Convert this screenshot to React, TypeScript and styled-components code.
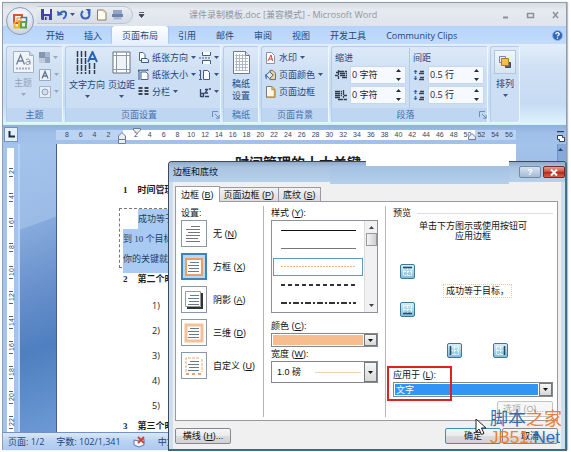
import React from "react";
import styled, { createGlobalStyle, css } from "styled-components";

const uiFont = `"Open Sans", "Noto Sans CJK SC", sans-serif`;
const dialogFont = `"Liberation Sans", "Noto Sans CJK SC", sans-serif`;

const GlobalStyle = createGlobalStyle`
  *, *::before, *::after { box-sizing: border-box; }
  body { margin: 0; background: #fff; }
  button, input, select { font: inherit; color: inherit; margin: 0; padding: 0; }
  svg { display: block; flex: none; }
`;

const Screen = styled.div`
  position: relative;
  height: 100vh;
  padding: 2px 4px 2px 2px;
  overflow: hidden;
  font: 9px/12px ${uiFont};
  color: #24457c;
  background: #fff;
`;

const AppWindow = styled.div`
  height: 100%;
  display: flex;
  flex-direction: column;
  background: #c3daf5;
  border: 1px solid #8f9db0;
  border-bottom: 0;
  box-shadow: 1px 0 1px #b9bdc4;
`;

/* Title bar */
const TitleBar = styled.header`
  position: relative;
  height: 23px;
  flex: none;
  display: flex;
  align-items: center;
  padding-left: 34px;
  background: linear-gradient(#d6dbe2, #e6eaf0 30%, #dfe5ee);
`;
const OfficeButton = styled.button`
  position: absolute;
  left: 3px;
  top: 4px;
  width: 28px;
  height: 28px;
  display: grid;
  place-items: center;
  border: 1px solid #8e9cb2;
  border-radius: 50%;
  background: radial-gradient(circle at 50% 30%, #fff, #dfe4ee 55%, #b9c4d6);
  z-index: 1;
`;
const QuickBar = styled.div`
  display: flex;
  align-items: center;
  gap: 5px;
  height: 18px;
  padding: 0 9px 0 4px;
  border: 1px solid #bcc6d4;
  border-left: 0;
  border-radius: 0 9px 9px 0;
  background: linear-gradient(#e9edf3, #d4dce8);
`;
const IconButton = styled.button`
  display: flex;
  align-items: center;
  gap: 2px;
  border: 0;
  background: none;
`;
const WindowTitle = styled.h1`
  flex: 1;
  margin: 0;
  padding-left: 44px;
  font-size: 9px;
  font-weight: 400;
  color: #8f979f;
  white-space: nowrap;
`;
const WindowButtons = styled.div`
  display: flex;
  gap: 16px;
  padding-right: 6px;
`;

/* Tabs */
const TabStrip = styled.nav`
  height: 18px;
  flex: none;
  display: flex;
  align-items: stretch;
  padding: 0 3px 0 33px;
  background: linear-gradient(#b5d3fa, #c4dcfa);
`;
const RibbonTab = styled.button<{ $active?: boolean }>`
  border: 0;
  padding: 2px 10px 0;
  background: none;
  white-space: nowrap;
  ${(p) =>
    p.$active &&
    css`
      border-radius: 3px 3px 0 0;
      background: linear-gradient(#fff, #e6f0fb);
      box-shadow: 0 0 2px #7fa3d2;
    `}
`;
const HelpButton = styled(IconButton)`
  margin-left: auto;
`;

/* Ribbon */
const Ribbon = styled.div`
  height: 81px;
  flex: none;
  display: flex;
  gap: 2px;
  padding: 2px 2px 1px 3px;
  background: linear-gradient(#e3eefa, #cfe0f4 30%, #c6dbf3 75%, #ddf4fd);
  border-bottom: 1px solid #d5f4f9;
`;
const GroupBox = styled.section<{ $width: number }>`
  width: ${(p) => p.$width}px;
  flex: none;
  display: flex;
  flex-direction: column;
  border: 1px solid #b2cbe9;
  border-right-color: #eef8fe;
  border-bottom-color: #e3fafd;
  border-radius: 3px;
  background: linear-gradient(#dde9f7, #ccdef3 40%, #cadef4);
`;
const GroupBody = styled.div`
  flex: 1;
  display: flex;
  gap: 3px;
  padding: 1px 3px 0;
`;
const GroupLabel = styled.footer`
  height: 14px;
  flex: none;
  display: flex;
  align-items: center;
  justify-content: center;
  color: #4470ad;
  background: #bed6f2;
`;
const GroupName = styled.span`
  flex: 1;
  text-align: center;
`;
const BigButton = styled.button<{ $faded?: boolean }>`
  display: flex;
  flex-direction: column;
  align-items: center;
  justify-content: flex-start;
  flex: 1;
  gap: 4px;
  padding-top: 3px;
  border: 0;
  background: none;
  white-space: nowrap;
  color: ${(p) => (p.$faded ? "#93a3b8" : "inherit")};
`;
const SmallStack = styled.div`
  display: flex;
  flex-direction: column;
  padding-top: 1px;
`;
const SmallButton = styled.button`
  height: 17px;
  display: flex;
  align-items: center;
  gap: 3px;
  border: 0;
  background: none;
  white-space: nowrap;
`;
const ArrangeButton = styled(BigButton)`
  flex: 1;
  & > span:first-child {
    display: grid;
    place-items: center;
    width: 22px;
    height: 24px;
    border: 1px solid #b0c6e0;
    background: linear-gradient(#f0f6fc, #d5e4f5);
  }
`;
const SpinColumn = styled.div`
  flex: 1;
  display: flex;
  flex-direction: column;
  gap: 2px;
  padding-top: 4px;
  & + & {
    border-left: 1px solid #b0c9e8;
    padding-left: 3px;
  }
`;
const SpinRow = styled.label`
  display: flex;
  align-items: center;
  gap: 3px;
  height: 18px;
`;
const SpinField = styled.span`
  flex: 1;
  min-width: 0;
  height: 18px;
  display: flex;
  align-items: center;
  padding: 0 4px 0 1px;
  background: #f6fafe;
  border: 1px solid #c5d7ee;
  color: #1c2430;
`;
const SpinInput = styled.input`
  flex: 1;
  min-width: 0;
  width: 20px;
  border: 0;
  outline: 0;
  background: none;
  font-size: 9px;
`;

/* Work area */
const RulerBar = styled.div`
  height: 19px;
  flex: none;
  display: flex;
  align-items: center;
  background: linear-gradient(#8fb0dc, #9fbfe9 40%, #a2c2ec);
`;
const TabStop = styled.button`
  width: 14px;
  height: 15px;
  flex: none;
  margin: 0 38px 0 1px;
  display: grid;
  place-items: center;
  border: 1px solid #6f93c8;
  background: #e4eefb;
`;
const RulerScale = styled.div`
  position: relative;
  width: 460px;
  height: 10px;
  display: flex;
  padding-left: 4px;
  background: linear-gradient(90deg, #bcd3f2 67px, #fff 67px, #fff 419px, #bcd3f2 419px);
  font: 7px/10px ${dialogFont};
  color: #3c4654;
`;
const RulerMark = styled.span`
  flex: 1 1 0;
  width: 0;
  text-align: center;
`;
const IndentMark = styled.svg<{ $x: number; $y: number }>`
  position: absolute;
  left: ${(p) => p.$x}px;
  top: ${(p) => p.$y}px;
`;
const BrowseIcon = styled.span`
  margin: 4px 1px 0 auto;
`;
const Workspace = styled.main`
  flex: 1;
  min-height: 0;
  display: flex;
  background: linear-gradient(180deg, #a5c4ec, #8fb0df 22%, #5580bf 58%, #4c7abb 78%, #6f9bd6);
`;
const SideRuler = styled.div`
  width: 17px;
  flex: none;
  overflow: hidden;
  padding: 4px 4px 0 4px;
  background: #a4c4ee;
  border-right: 2px solid #b8d2f4;
`;
const SideScale = styled.div`
  height: 100%;
  padding-top: 12px;
  background: #fff;
  font: 7px/9px ${dialogFont};
  color: #3c4654;
`;
const SideMark = styled.span`
  display: flex;
  align-items: center;
  justify-content: center;
  gap: 2px;
  height: 25px;
  width: 9px;
  writing-mode: vertical-rl;
  transform: rotate(180deg);
  white-space: nowrap;
  &::before,
  &::after {
    content: "";
    width: 4px;
    height: 1px;
    background: #59626e;
  }
`;
const Desk = styled.div`
  width: 37px;
  flex: none;
  border-right: 1px solid #41618f;
  background: linear-gradient(160deg, #a5c4ec, #9bbbe7 80px, #86aadc 81px, #6890cc 50%, #4f7fc0 70%, #6d9ad5);
`;
const Page = styled.article`
  width: 459px;
  flex: none;
  padding: 9px 39px 0 62px;
  background: #fff;
  color: #1c1c1c;
  overflow: hidden;
`;
const PageTitle = styled.h2`
  margin: 0;
  font: 700 14px/18px "Noto Sans CJK SC", sans-serif;
  text-align: center;
`;
const Heading = styled.h3`
  display: flex;
  gap: 10px;
  margin: 0;
  padding-left: 4px;
  font: 700 9px/16px "Liberation Serif", "Noto Sans CJK SC", serif;
`;
const FirstHeading = styled(Heading)`
  margin: 11px 0 10px;
`;
const BorderedText = styled.div`
  height: 60px;
  padding-left: 3px;
  border: 1px dashed #777;
  font: 9px/20px "Liberation Serif", "Noto Sans CJK SC", serif;
  color: #27405f;
`;
const SelectedLine = styled.p<{ $indent?: boolean }>`
  margin: 0 0 0 ${(p) => (p.$indent ? 15 : 0)}px;
  height: 20px;
  background: #a9cbf3;
  white-space: nowrap;
`;
const SelectionTail = styled.div`
  height: 5px;
  margin: 0 0 -2px 4px;
  background: #a9cbf3;
`;
const NumberedList = styled.ol`
  margin: 6px 0 0;
  padding: 0 0 0 33px;
  list-style: none;
  font-family: ${uiFont};
`;
const NumberedItem = styled.li`
  height: 25px;
  line-height: 25px;
`;
const ScrollGutter = styled.div`
  width: 9px;
  margin-left: auto;
  padding-top: 4px;
  background: #86a9da;
  border-left: 1px solid #6f93c8;
`;
const StatusBar = styled.footer`
  height: 18px;
  flex: none;
  display: flex;
  align-items: center;
  gap: 12px;
  padding-left: 5px;
  background: linear-gradient(#dbe8f8, #bcd4f2 45%, #adc9ee);
  border-top: 1px solid #6f93c8;
`;

/* Dialog */
const Dialog = styled.section`
  position: absolute;
  left: 168px;
  right: 4px;
  top: 161px;
  bottom: 1px;
  display: flex;
  flex-direction: column;
  padding: 0 4px;
  border: 1px solid #3b4a5c;
  border-right: 2px solid #3f7386;
  border-bottom: 2px solid #32717e;
  border-radius: 4px 4px 0 0;
  background: #cfdeee;
  font: 9px/12px ${dialogFont};
  color: #111;
`;
const DialogTitle = styled.header`
  position: relative;
  height: 20px;
  flex: none;
  display: flex;
  align-items: center;
  margin: 0 -4px;
  padding: 0 0 0 4px;
  border-radius: 3px 3px 0 0;
  background: linear-gradient(#8fa9c6, #a9c4e2 25%, #b8d0ea);
`;
const TitleBand = styled.span`
  position: absolute;
  left: 161px;
  right: 56px;
  top: 4px;
  height: 18px;
  background: linear-gradient(#a4c1e2, #b5cfeb);
`;
const TitleGap = styled.span`
  position: absolute;
  left: 197px;
  right: 56px;
  top: -1px;
  height: 5px;
  background: #fff;
`;
const DialogName = styled.h2`
  flex: 1;
  margin: 0;
  font-size: 9px;
  font-weight: 400;
`;
const CaptionButton = styled.button<{ $close?: boolean }>`
  width: 22px;
  height: 12px;
  margin-left: 2px;
  display: grid;
  place-items: center;
  border: 1px solid ${(p) => (p.$close ? "#7b2a22" : "#7288a3")};
  border-radius: 2px;
  background: ${(p) =>
    p.$close ? "linear-gradient(#e0a094, #c9503f 48%, #b5281a 52%, #d4634c)" : "linear-gradient(#d6e3f2, #a5bcd6)"};
  font: 700 9px/9px ${dialogFont};
  color: #fff;
`;
const DialogBody = styled.div`
  flex: 1;
  min-height: 0;
  display: flex;
  flex-direction: column;
  padding: 4px 3px 5px 2px;
  background: #f0f0f0;
`;
const DialogTabs = styled.div`
  height: 15px;
  flex: none;
  display: flex;
  align-items: flex-end;
`;
const DialogTab = styled.button<{ $active?: boolean }>`
  height: ${(p) => (p.$active ? 16 : 14)}px;
  margin-bottom: ${(p) => (p.$active ? -1 : 0)}px;
  padding: 0 ${(p) => (p.$active ? 5 : 4)}px;
  border: 1px solid #989ca2;
  border-bottom: 0;
  background: ${(p) => (p.$active ? "#fff" : "linear-gradient(#f3f3f3, #dcdcdc)")};
  white-space: nowrap;
  z-index: ${(p) => (p.$active ? 1 : 0)};
  & + & {
    border-left: 0;
  }
`;
const TabPanel = styled.div`
  flex: 1;
  min-height: 0;
  display: flex;
  padding: 4px 4px 3px 5px;
  border: 1px solid #989ca2;
  background: #fff;
`;
const SettingColumn = styled.fieldset`
  width: 83px;
  flex: none;
  margin: 0;
  padding: 0;
  border: 0;
  border-right: 1px solid #b5b5b5;
`;
const FieldLabel = styled.label`
  display: block;
  height: 14px;
  line-height: 14px;
`;
const SettingList = styled.div`
  display: flex;
  flex-direction: column;
  gap: 6px;
`;
const SettingButton = styled.button<{ $active?: boolean }>`
  height: 27px;
  display: flex;
  align-items: center;
  gap: 6px;
  border: 0;
  background: none;
  text-align: left;
  & > span:first-child {
    width: 26px;
    height: 27px;
    display: grid;
    place-items: center;
    border: ${(p) => (p.$active ? "2px solid #3f82bd" : "1px solid #8798aa")};
    background: ${(p) => (p.$active ? "#b9d9f2" : "#fff")};
  }
`;
const StyleColumn = styled.div`
  width: 122px;
  flex: none;
  padding: 0 7px;
  border-right: 1px solid #b5b5b5;
`;
const StyleList = styled.div`
  display: flex;
  height: 93px;
  margin-bottom: 6px;
  border: 1px solid #8d9299;
`;
const StyleOptions = styled.div`
  flex: 1;
  padding: 1px 1px 0;
`;
const StyleOption = styled.button<{ $active?: boolean }>`
  width: 100%;
  height: 18px;
  display: grid;
  place-items: center;
  border: 1px solid ${(p) => (p.$active ? "#5b9cc4" : "transparent")};
  background: none;
`;
const MiniScroll = styled.div`
  width: 13px;
  display: flex;
  flex-direction: column;
  align-items: center;
  padding: 5px 0;
  background: #f1f1f1;
  border-left: 1px solid #ddd;
`;
const ScrollThumb = styled.span`
  width: 11px;
  height: 13px;
  margin: 4px 0 auto;
  border: 1px solid #999;
  background: linear-gradient(90deg, #f4f4f4, #cfcfcf);
`;
const SelectFrame = styled.div<{ $height: number }>`
  display: flex;
  height: ${(p) => p.$height}px;
  border: 1px solid #85898f;
  background: #fff;
`;
const Select = styled.select<{ $kind: "colour" | "width" | "target" }>`
  appearance: none;
  flex: 1;
  min-width: 0;
  border: 1px solid #fff;
  border-radius: 0;
  outline: 0;
  padding-left: 4px;
  line-height: 10px;
  background: #fff;
  ${(p) =>
    p.$kind === "colour" &&
    css`
      background: #f8bd8f;
    `}
  ${(p) =>
    p.$kind === "width" &&
    css`
      background: linear-gradient(#edd2b8, #edd2b8) 42px 9px / 46px 1px no-repeat #fff;
    `}
  ${(p) =>
    p.$kind === "target" &&
    css`
      padding-left: 1px;
      background: #3294f4;
      color: #fff;
    `}
`;
const SelectArrow = styled.span`
  width: 13px;
  flex: none;
  display: grid;
  place-items: center;
  border: 1px solid #74787e;
  background: linear-gradient(#f6f6f6, #d8d8d8);
  pointer-events: none;
`;
const PreviewColumn = styled.div`
  flex: 1;
  min-width: 0;
  display: flex;
  flex-direction: column;
  padding-left: 7px;
`;
const PreviewHead = styled.div`
  display: flex;
  align-items: center;
  gap: 6px;
  height: 14px;
  &::after {
    content: "";
    flex: 1;
    height: 1px;
    background: #dcdcdc;
  }
`;
const PreviewHint = styled.p`
  margin: 1px 0 0;
  line-height: 10px;
  text-align: center;
`;
const PreviewArea = styled.div`
  display: grid;
  grid-template-columns: 15px 1fr;
  column-gap: 28px;
  padding: 23px 0 0 7px;
`;
const SideButtons = styled.div`
  display: flex;
  flex-direction: column;
  gap: 23px;
`;
const EdgeButton = styled.button`
  width: 15px;
  height: 15px;
  display: grid;
  place-items: center;
  border: 1px solid #3d7896;
  border-radius: 2px;
  background: linear-gradient(#d6eefa, #7fbede);
`;
const PreviewText = styled.span`
  align-self: center;
  justify-self: start;
  padding: 0 2px;
  border: 1px dotted #e3c9a4;
`;
const BottomButtons = styled.div`
  display: flex;
  gap: 31px;
  margin: 26px 0 10px 54px;
`;
const TargetField = styled.div`
  position: relative;
`;
const Highlight = styled.span`
  position: absolute;
  left: -6px;
  top: -2px;
  width: 65px;
  height: 35px;
  border: 2px solid #e0211d;
  pointer-events: none;
`;
const PushButton = styled.button<{ $primary?: boolean }>`
  width: 56px;
  height: 16px;
  border: 1px solid ${(p) => (p.$primary ? "#3c8fb5" : "#85898f")};
  border-radius: 2px;
  background: linear-gradient(#f5f5f5, #ebebeb 48%, #dcdcdc 52%, #d2d2d2);
  line-height: 12px;
  white-space: nowrap;
  &:disabled {
    border-color: #c4c4c4;
    background: #f7f7f7;
    color: #aaa;
  }
`;
const OptionsButton = styled(PushButton)`
  align-self: flex-end;
  margin-top: 4px;
  padding-left: 5px;
  text-align: left;
`;
const DialogFooter = styled.footer`
  display: flex;
  align-items: center;
  gap: 1px;
  padding-top: 7px;
  & > :first-child {
    margin-right: auto;
  }
`;
const Watermark = styled.div`
  position: absolute;
  right: 9px;
  bottom: 4px;
  width: 72px;
  font: 18px/22px "Noto Sans CJK SC", sans-serif;
  color: #2d6fb4;
  white-space: nowrap;
  pointer-events: none;
`;
const WatermarkSite = styled.div`
  font: 17px/20px "Liberation Sans", sans-serif;
`;
const Orange = styled.span`
  color: #ee8035;
`;
const Pointer = styled.svg`
  position: absolute;
  left: 475px;
  top: 418px;
`;

const Caret = ({ up = false, color = "#3b5684" }: { up?: boolean; color?: string }) => (
  <svg width="5" height="3" viewBox="0 0 5 3" aria-hidden="true">
    <path d={up ? "M0 3h5L2.5 0z" : "M0 0h5L2.5 3z"} fill={color} />
  </svg>
);

const OfficeLogo = () => (
  <svg width="18" height="18" viewBox="0 0 18 18" fill="none" strokeWidth="2">
    <path d="M8 11H3V3h8v3" stroke="#d8542a" />
    <path d="M9 5.5h6.5V11" stroke="#3c78c8" strokeWidth="1.6" />
    <path d="M8 8v7.500H3.500V10" stroke="#f0b428" />
    <path d="M10 10h5v5.500h-5z" stroke="#5fa53a" />
    <path d="M6 6h4v4H6z" stroke="#e88a36" strokeWidth="1" />
  </svg>
);
const SaveIcon = () => (
  <svg width="11" height="11" viewBox="0 0 11 11">
    <path d="M0 0h11v11H1L0 10z" fill="#4444a8" />
    <path d="M3 0h6v5H3z" fill="#eef2ff" />
    <path d="M3 7h5v4H3z" fill="#c8cde8" />
    <path d="M4 8h1.500v3H4z" fill="#33338c" />
  </svg>
);
const UndoIcon = () => (
  <svg width="11" height="11" viewBox="0 0 11 11" fill="none">
    <path d="M3 4.500C6 1 9.500 2.500 9 5.500 8.800 7.500 7.500 9 6 9.500" stroke="#3a62b8" strokeWidth="2" />
    <path d="M0 1.500l.5 5.500L6 5.800z" fill="#3a62b8" />
  </svg>
);
const RedoIcon = () => (
  <svg width="11" height="11" viewBox="0 0 11 11" fill="none">
    <path d="M3 2C-.2 5 1.500 9.500 5.500 9.500S10.500 5 8 3" stroke="#3a62b8" strokeWidth="2" />
    <path d="M5.500 0h5v5z" fill="#3a62b8" />
  </svg>
);
const NewPageIcon = () => (
  <svg width="11" height="12" viewBox="0 0 11 12">
    <path d="M1.500 1h6l2.500 2.500V11H1.500z" fill="#fffdf4" stroke="#8b7d5c" />
    <path d="M7.500 1v2.500H10z" fill="#e2b659" />
  </svg>
);
const PrinterIcon = () => (
  <svg width="11" height="11" viewBox="0 0 11 11">
    <path d="M1 1h9v4H1z" fill="#93a5c8" />
    <path d="M0 5h11v3H0z" fill="#6d83ad" />
    <path d="M1.500 8h8v2.500h-8z" fill="#aab8d2" />
  </svg>
);
const HelpIcon = () => (
  <svg width="11" height="11" viewBox="0 0 11 11">
    <circle cx="5.500" cy="5.500" r="5" fill="#2f68bb" stroke="#90b4e6" />
    <path d="M3.800 4.300c0-2.200 3.600-2 3.400 0-.1 1-1.700 1-1.700 2.300M5.500 7.500v1.300" stroke="#fff" strokeWidth="1.300" fill="none" />
  </svg>
);
const ThemeIcon = () => (
  <svg width="21" height="22" viewBox="0 0 21 22">
    <path d="M.5.5h16l4 4v17H.5z" fill="#f0f4f9" stroke="#a4b2c4" />
    <path d="M16.500.5v4h4" fill="#cdd7e4" stroke="#a4b2c4" />
    <path d="M3.500 13.500L7.500 4l4 9.500M5 10h5" fill="none" stroke="#6f7f96" strokeWidth="1.300" />
    <path d="M13 8.500c4-1.500 4 1 4 5M17 10.500c-5-.5-5 3-2.500 3 1.200 0 2.500-1 2.500-2" fill="none" stroke="#7f8fa5" />
    <path d="M3 17.500h14" stroke="#9fb0c5" strokeWidth="2" strokeDasharray="2 1" />
  </svg>
);
const ThemeColorIcon = () => (
  <svg width="11" height="11" viewBox="0 0 11 11">
    <path d="M0 0h6v6H0z" fill="#8496b0" />
    <path d="M6 0h5v5H6z" fill="#a9b8cc" />
    <path d="M0 6h6v5H0z" fill="#c0ccdb" />
    <path d="M6 5h5v6H6z" fill="#94a6bf" />
  </svg>
);
const ThemeFontIcon = () => (
  <svg width="12" height="12" viewBox="0 0 12 12">
    <path d="M.5.5h11v11H.5z" fill="#edf2f8" stroke="#9aabc1" />
    <path d="M3 9.500l3-7 3 7M4 7h4" fill="none" stroke="#5e7594" strokeWidth="1.300" />
  </svg>
);
const ThemeEffectIcon = () => (
  <svg width="12" height="12" viewBox="0 0 12 12">
    <path d="M.5.5h11v11H.5z" fill="#e6edf5" stroke="#a5b4c8" />
    <circle cx="6" cy="6" r="3" fill="#d3deea" stroke="#8da1bb" />
  </svg>
);
const TextDirectionIcon = () => (
  <svg width="22" height="24" viewBox="0 0 22 24" fill="none">
    <path d="M1.500 0v23M5.500 0v23M9.500 0v23M13.500 12v11M18.500 12v11" stroke="#2f3c50" strokeWidth="1.500" strokeDasharray="6 1" />
    <path d="M12 11l4.500-10L21 11M13.500 8h6" stroke="#2566b5" strokeWidth="2" />
  </svg>
);
const MarginIcon = () => (
  <svg width="19" height="24" viewBox="0 0 19 24">
    <path d="M1 1h17v21H1z" fill="#fff" stroke="#626f7f" />
    <path d="M4.500 1v21M14.500 1v21M1 4.500h17M1 18.500h17" stroke="#8b98a8" fill="none" />
    <path d="M5 5h9v13H5z" fill="#eef3f8" />
  </svg>
);
const OrientationIcon = () => (
  <svg width="11" height="11" viewBox="0 0 11 11">
    <path d="M1.500.5H5l2 2v6H1.500z" fill="#fff" stroke="#506587" />
    <path d="M3.500 6.500H9l1.500 1.500v2.500h-7z" fill="#e5f0fb" stroke="#3f5c8a" />
  </svg>
);
const SizeIcon = () => (
  <svg width="11" height="11" viewBox="0 0 11 11">
    <path d="M3 3h5l2 2v5.500H3z" fill="#fff" stroke="#506587" />
    <path d="M0 1.200h10M1 2v9M0 3l1-2M9 0l1.500 1.200" stroke="#375582" fill="none" />
  </svg>
);
const ColumnsIcon = () => (
  <svg width="11" height="11" viewBox="0 0 11 11">
    <path d="M2.500 1v9M8.500 1v9" stroke="#3c4654" strokeWidth="4" strokeDasharray="2 1" />
  </svg>
);
const BreakIcon = () => (
  <svg width="12" height="12" viewBox="0 0 12 12" fill="none" stroke="#465e85">
    <path d="M3.500 0v3.500h8V0M3.500 12V8.500h8V12" fill="#fff" />
    <path d="M0 6h12" strokeDasharray="2 1" />
  </svg>
);
const LineNumberIcon = () => (
  <svg width="12" height="12" viewBox="0 0 12 12" fill="none" stroke="#465e85">
    <path d="M4.500 1.500h4l2 2v7h-6z" fill="#fff" />
    <path d="M1.500 1v10M0 1.500h2M0 6h2M0 10.500h3" />
  </svg>
);
const HyphenIcon = () => (
  <svg width="12" height="12" viewBox="0 0 12 12" fill="none" stroke="#2f4568">
    <path d="M1.500 3v8M1.500 7.500h3v3h-3M6 3.500h2.500L6 7h3M10 3h2M6 10.500h4" strokeWidth="1.300" />
  </svg>
);
const GridPaperIcon = () => (
  <svg width="17" height="23" viewBox="0 0 17 23" fill="none">
    <path d="M.5.5h12l4 4v18H.5z" fill="#fff" stroke="#6c7a8c" />
    <path d="M3.500 3v17M6.500 3v17M9.500 3v17M12.500 5v15M2 4.500h10M2 7.500h13M2 10.500h13M2 13.500h13M2 16.500h13M2 19.500h13" stroke="#b0bac7" />
    <path d="M12.500.5v4h4" stroke="#6c7a8c" fill="#dfe6ef" />
  </svg>
);
const WatermarkIcon = () => (
  <svg width="11" height="12" viewBox="0 0 11 12">
    <path d="M1.500.5h5l3 3v8h-8z" fill="#fff" stroke="#8a96a8" />
    <path d="M3 9l3-6 1.500 6M4 7h3.500" fill="none" stroke="#c9473d" />
  </svg>
);
const PageColorIcon = () => (
  <svg width="11" height="12" viewBox="0 0 12 12">
    <path d="M5.500 1h3l3 3v7h-6z" fill="#e9d49c" stroke="#5d6470" />
    <path d="M1 6l4-3.500L9 6 5 10z" fill="#dbe8f7" stroke="#42536d" />
    <path d="M0 6c1-2 2-1 2 1v4C.5 10 0 8 0 6z" fill="#3d7ac9" />
  </svg>
);
const PageBorderIcon = () => (
  <svg width="11" height="12" viewBox="0 0 11 12">
    <path d="M1.500.5h5.500l3 3v8H1.500z" fill="#fff8e8" stroke="#707b8c" />
    <path d="M7 .5v3h3M9.500 4v7H2" fill="none" stroke="#c79c54" strokeWidth="1.500" />
  </svg>
);
const IndentIcon = ({ right = false }: { right?: boolean }) => (
  <svg width="12" height="11" viewBox="0 0 12 11" fill="none" stroke="#323e50">
    {right ? (
      <path d="M0 1.500h7M0 3.500h7M0 5.500h7M0 7.500h5M8.500 0v8M12 5.500H9M3 9.500h9" strokeDasharray="5 .7" strokeWidth="1.300" />
    ) : (
      <path d="M4 1.500h8M5 3.500h7M5 5.500h7M7 7.500h5M3.500 0v9M0 5.500h3M1 2.500h3" strokeDasharray="5 .7" strokeWidth="1.300" />
    )}
  </svg>
);
const SpacingIcon = () => (
  <svg width="12" height="12" viewBox="0 0 12 12">
    <path d="M2.500 1v10" stroke="#3f78c4" strokeWidth="1.500" strokeDasharray="4 2" />
    <path d="M.5 3l2-2 2 2zM.5 9l2 2 2-2z" fill="#2d62ad" />
    <path d="M7 2.500h4M6 4.500h5M7 8.500h4M6 10.500h5" stroke="#3b4452" strokeWidth="1.500" />
  </svg>
);
const ArrangeIcon = () => (
  <svg width="13" height="13" viewBox="0 0 13 13">
    <path d="M6.500 6.500h5v5h-5z" fill="#55617a" stroke="#3d485e" />
    <path d="M.5.500h6v6h-6z" fill="#e9eef6" stroke="#7a889e" />
    <path d="M2.500 2.500h7v7h-7z" fill="#f4c145" stroke="#b07a17" />
  </svg>
);
const LauncherIcon = () => (
  <svg width="8" height="8" viewBox="0 0 8 8" fill="none" stroke="#6d8fc0">
    <path d="M.5 6V.5H6M3 3l4 4M7.200 4v3.200H4" />
  </svg>
);
const ProofIcon = () => (
  <svg width="13" height="12" viewBox="0 0 13 12">
    <path d="M1 4l5 1 5-2v6L6 11 1 9z" fill="#f4f7fc" stroke="#5d7bab" />
    <path d="M5 1l6 6M11 1L5 7" stroke="#cf4127" strokeWidth="1.800" />
  </svg>
);
const BrowseGlyph = () => (
  <svg width="9" height="12" viewBox="0 0 9 12" fill="none" stroke="#2c4061">
    <path d="M1 .5h7" strokeWidth="1.500" />
    <path d="M1.500 4.500h5v2h2v4h-5v-2h-2z" fill="#fff" />
  </svg>
);

type SettingKind = "none" | "box" | "shadow" | "three" | "custom";
const SettingGlyph = ({ kind }: { kind: SettingKind }) => {
  const lines = "M6 5.500h9M4 8.500h11M5 11.500h10M4 14.500h11";
  return (
    <svg width="20" height="20" viewBox="0 0 20 20" fill="none">
      {kind === "box" && <path d="M2 2h16v16H2z" fill="#fff" stroke="#eb9f62" strokeWidth="2" />}
      {kind === "shadow" && (
        <>
          <path d="M1.500 1.500h15v15h-15z" fill="#fff" stroke="#999" />
          <path d="M18 3v15H3" stroke="#333" strokeWidth="2" />
        </>
      )}
      {kind === "three" && <path d="M2 2h16v16H2z" stroke="#f6c197" strokeWidth="3" />}
      {kind === "custom" && (
        <>
          <path d="M2 16V2h13M18 3v13" stroke="#eda974" strokeDasharray="3 1" />
          <path d="M2 18h16" stroke="#eb9f62" strokeWidth="2" strokeDasharray="3 3" />
        </>
      )}
      {kind === "none" ? (
        <path d="M7 2.500h9M2 5.500h14M4 8.500h12M2 11.500h14M2 14.500h12M2 17.500h14" stroke="#777" />
      ) : (
        <path d={lines} stroke="#667a90" />
      )}
    </svg>
  );
};

const LineSample = ({ color, dash, width = 1 }: { color: string; dash?: string; width?: number }) => (
  <svg width="75" height="2" viewBox="0 0 75 2">
    <path d={width === 1 ? "M0 .5h75" : "M0 1h75"} stroke={color} strokeWidth={width} strokeDasharray={dash} />
  </svg>
);

const EdgeGlyph = ({ side }: { side: "top" | "bottom" | "left" | "right" }) => {
  const bars = { top: "M1 1.500h9", bottom: "M1 9.500h9", left: "M1.500 1v9", right: "M9.500 1v9" };
  return (
    <svg width="11" height="11" viewBox="0 0 11 11" fill="none">
      <path d="M1.500 1.500h8v8h-8zM5.500 2v7M2 5.500h7" stroke="#f4fbff" strokeDasharray="2 1" />
      <path d={bars[side]} stroke="#244c6b" strokeWidth="1.600" />
    </svg>
  );
};

const Key = ({ k }: { k: string }) => (
  <>
    (<u>{k}</u>)
  </>
);

const Spinner = ({ icon, name, value }: { icon: React.ReactNode; name: string; value: string }) => (
  <SpinRow>
    {icon}
    <SpinField>
      <SpinInput aria-label={name} defaultValue={value} />
      <svg width="5" height="12" viewBox="0 0 5 12" aria-hidden="true">
        <path d="M0 3h5L2.500 0zM0 9h5L2.500 12z" fill="#222d40" />
      </svg>
    </SpinField>
  </SpinRow>
);

const Group = ({
  name,
  width,
  launcher,
  children,
}: {
  name: string;
  width: number;
  launcher?: boolean;
  children: React.ReactNode;
}) => (
  <GroupBox $width={width}>
    <GroupBody>{children}</GroupBody>
    <GroupLabel>
      <GroupName>{name}</GroupName>
      {launcher && (
        <IconButton aria-label={name + "选项"}>
          <LauncherIcon />
        </IconButton>
      )}
    </GroupLabel>
  </GroupBox>
);

const tabs = ["开始", "插入", "页面布局", "引用", "邮件", "审阅", "视图", "开发工具", "Community Clips"];
const rulerMarks = Array.from({ length: 33 }, (_, i) => (i === 4 ? "" : String(Math.abs(i * 2 - 8))));
const sideMarks = Array.from({ length: 11 }, (_, i) => String(i * 2 + 2));
const settings: { kind: SettingKind; label: string; k: string }[] = [
  { kind: "none", label: "无", k: "N" },
  { kind: "box", label: "方框", k: "X" },
  { kind: "shadow", label: "阴影", k: "A" },
  { kind: "three", label: "三维", k: "D" },
  { kind: "custom", label: "自定义", k: "U" },
];

const BordersDialog = () => (
  <Dialog role="dialog" aria-labelledby="borders-title">
    <DialogTitle>
      <TitleBand />
      <TitleGap />
      <DialogName id="borders-title">边框和底纹</DialogName>
      <CaptionButton aria-label="帮助">?</CaptionButton>
      <CaptionButton $close aria-label="关闭">
        <svg width="8" height="7" viewBox="0 0 8 7">
          <path d="M1 .5l6 6M7 .5l-6 6" stroke="#fff" strokeWidth="2" />
        </svg>
      </CaptionButton>
    </DialogTitle>
    <DialogBody>
      <DialogTabs role="tablist">
        <DialogTab role="tab" $active>
          边框 <Key k="B" />
        </DialogTab>
        <DialogTab role="tab">
          页面边框 <Key k="P" />
        </DialogTab>
        <DialogTab role="tab">
          底纹 <Key k="S" />
        </DialogTab>
      </DialogTabs>
      <TabPanel role="tabpanel">
        <SettingColumn>
          <FieldLabel as="div">设置:</FieldLabel>
          <SettingList>
            {settings.map((s) => (
              <SettingButton key={s.kind} $active={s.kind === "box"}>
                <span>
                  <SettingGlyph kind={s.kind} />
                </span>
                <span>
                  {s.label} <Key k={s.k} />
                </span>
              </SettingButton>
            ))}
          </SettingList>
        </SettingColumn>
        <StyleColumn>
          <FieldLabel as="div">
            样式 <Key k="Y" />:
          </FieldLabel>
          <StyleList>
            <StyleOptions>
              <StyleOption aria-label="实线">
                <LineSample color="#111" />
              </StyleOption>
              <StyleOption aria-label="细线">
                <LineSample color="#777" />
              </StyleOption>
              <StyleOption $active aria-label="点线">
                <LineSample color="#edb98d" dash="2 1" />
              </StyleOption>
              <StyleOption aria-label="虚线">
                <LineSample color="#333" dash="4 3" width={2} />
              </StyleOption>
              <StyleOption aria-label="点划线">
                <LineSample color="#333" dash="6 2 2 2" width={2} />
              </StyleOption>
            </StyleOptions>
            <MiniScroll>
              <Caret up color="#444" />
              <ScrollThumb />
              <Caret color="#444" />
            </MiniScroll>
          </StyleList>
          <FieldLabel htmlFor="line-colour">
            颜色 <Key k="C" />:
          </FieldLabel>
          <SelectFrame $height={14}>
            <Select id="line-colour" $kind="colour" />
            <SelectArrow>
              <Caret color="#111" />
            </SelectArrow>
          </SelectFrame>
          <FieldLabel htmlFor="line-width">
            宽度 <Key k="W" />:
          </FieldLabel>
          <SelectFrame $height={22}>
            <Select id="line-width" $kind="width">
              <option>1.0 磅</option>
            </Select>
            <SelectArrow>
              <Caret color="#111" />
            </SelectArrow>
          </SelectFrame>
        </StyleColumn>
        <PreviewColumn>
          <PreviewHead>预览</PreviewHead>
          <PreviewHint>
            单击下方图示或使用按钮可
            <br />
            应用边框
          </PreviewHint>
          <PreviewArea>
            <SideButtons>
              <EdgeButton aria-label="上边框">
                <EdgeGlyph side="top" />
              </EdgeButton>
              <EdgeButton aria-label="下边框">
                <EdgeGlyph side="bottom" />
              </EdgeButton>
            </SideButtons>
            <PreviewText>成功等于目标，</PreviewText>
          </PreviewArea>
          <BottomButtons>
            <EdgeButton aria-label="左边框">
              <EdgeGlyph side="left" />
            </EdgeButton>
            <EdgeButton aria-label="右边框">
              <EdgeGlyph side="right" />
            </EdgeButton>
          </BottomButtons>
          <TargetField>
            <FieldLabel htmlFor="apply-to">
              应用于 <Key k="L" />:
            </FieldLabel>
            <SelectFrame $height={15}>
              <Select id="apply-to" $kind="target">
                <option>文字</option>
              </Select>
              <SelectArrow>
                <Caret color="#111" />
              </SelectArrow>
            </SelectFrame>
            <Highlight />
          </TargetField>
          <OptionsButton disabled>
            选项 <Key k="O" />...
          </OptionsButton>
        </PreviewColumn>
      </TabPanel>
      <DialogFooter>
        <PushButton>
          横线 <Key k="H" />...
        </PushButton>
        <PushButton $primary>确定</PushButton>
        <PushButton>取消</PushButton>
      </DialogFooter>
    </DialogBody>
  </Dialog>
);

export default function App() {
  return (
    <Screen lang="zh-CN">
      <GlobalStyle />
      <AppWindow>
        <TitleBar>
          <OfficeButton aria-label="Office">
            <OfficeLogo />
          </OfficeButton>
          <QuickBar>
            <IconButton aria-label="保存">
              <SaveIcon />
            </IconButton>
            <IconButton aria-label="撤消">
              <UndoIcon />
              <Caret />
            </IconButton>
            <IconButton aria-label="重复">
              <RedoIcon />
            </IconButton>
            <IconButton aria-label="新建">
              <NewPageIcon />
            </IconButton>
            <IconButton aria-label="打印">
              <PrinterIcon />
            </IconButton>
          </QuickBar>
          <IconButton aria-label="自定义">
            <svg width="12" height="6" viewBox="0 0 12 6">
              <path d="M6 .5h5M6 2.500h5L8.500 5.500z" stroke="#3a4250" strokeWidth=".8" fill="#3a4250" />
            </svg>
          </IconButton>
          <WindowTitle>课件录制模板.doc [兼容模式] - Microsoft Word</WindowTitle>
          <WindowButtons>
            <IconButton aria-label="最小化">
              <svg width="9" height="8" viewBox="0 0 9 8">
                <path d="M2 6.500h5" stroke="#8c9198" strokeWidth="2" />
              </svg>
            </IconButton>
            <IconButton aria-label="还原">
              <svg width="9" height="8" viewBox="0 0 9 8">
                <path d="M1.500 2.500h6v4h-6z" stroke="#8c9198" strokeWidth="1.500" fill="none" />
              </svg>
            </IconButton>
            <IconButton aria-label="关闭">
              <svg width="9" height="8" viewBox="0 0 9 8">
                <path d="M2 1l5 6M7 1L2 7" stroke="#8c9198" strokeWidth="1.500" />
              </svg>
            </IconButton>
          </WindowButtons>
        </TitleBar>
        <TabStrip>
          {tabs.map((t) => (
            <RibbonTab key={t} $active={t === "页面布局"}>
              {t}
            </RibbonTab>
          ))}
          <HelpButton aria-label="帮助">
            <HelpIcon />
          </HelpButton>
        </TabStrip>
        <Ribbon>
          <Group name="主题" width={57}>
            <BigButton $faded>
              <ThemeIcon />
              <span>主题</span>
              <Caret color="#9aa9bd" />
            </BigButton>
            <SmallStack>
              {[ThemeColorIcon, ThemeFontIcon, ThemeEffectIcon].map((Icon, i) => (
                <SmallButton key={i} aria-label={["颜色", "字体", "效果"][i]}>
                  <Icon />
                  <Caret color="#9aa9bd" />
                </SmallButton>
              ))}
            </SmallStack>
          </Group>
          <Group name="页面设置" width={156} launcher>
            <BigButton>
              <TextDirectionIcon />
              <span>文字方向</span>
              <Caret />
            </BigButton>
            <BigButton>
              <MarginIcon />
              <span>页边距</span>
              <Caret />
            </BigButton>
            <SmallStack>
              <SmallButton>
                <OrientationIcon />
                纸张方向
                <Caret />
              </SmallButton>
              <SmallButton>
                <SizeIcon />
                纸张大小
                <Caret />
              </SmallButton>
              <SmallButton>
                <ColumnsIcon />
                分栏
                <Caret />
              </SmallButton>
            </SmallStack>
            <SmallStack>
              {[BreakIcon, LineNumberIcon, HyphenIcon].map((Icon, i) => (
                <SmallButton key={i} aria-label={["分隔符", "行号", "断字"][i]}>
                  <Icon />
                  <Caret />
                </SmallButton>
              ))}
            </SmallStack>
          </Group>
          <Group name="稿纸" width={36}>
            <BigButton>
              <GridPaperIcon />
              <span>
                稿纸
                <br />
                设置
              </span>
            </BigButton>
          </Group>
          <Group name="页面背景" width={68}>
            <SmallStack>
              <SmallButton>
                <WatermarkIcon />
                水印
                <Caret />
              </SmallButton>
              <SmallButton>
                <PageColorIcon />
                页面颜色
                <Caret />
              </SmallButton>
              <SmallButton>
                <PageBorderIcon />
                页面边框
              </SmallButton>
            </SmallStack>
          </Group>
          <Group name="段落" width={157} launcher>
            <SpinColumn>
              <span>缩进</span>
              <Spinner icon={<IndentIcon />} name="左缩进" value="0 字符" />
              <Spinner icon={<IndentIcon right />} name="右缩进" value="0 字符" />
            </SpinColumn>
            <SpinColumn>
              <span>间距</span>
              <Spinner icon={<SpacingIcon />} name="段前间距" value="0.5 行" />
              <Spinner icon={<SpacingIcon />} name="段后间距" value="0.5 行" />
            </SpinColumn>
          </Group>
          <GroupBox $width={30}>
            <ArrangeButton>
              <span>
                <ArrangeIcon />
              </span>
              <span>排列</span>
              <Caret />
            </ArrangeButton>
          </GroupBox>
        </Ribbon>
        <RulerBar>
          <TabStop aria-label="制表符">
            <svg width="7" height="7" viewBox="0 0 7 7">
              <path d="M1.500 0v5.500H7" stroke="#1d2b44" strokeWidth="2" fill="none" />
            </svg>
          </TabStop>
          <RulerScale>
            {rulerMarks.map((m, i) => (
              <RulerMark key={i}>{m}</RulerMark>
            ))}
            <IndentMark $x={77} $y={-2} width="8" height="6" viewBox="0 0 8 6">
              <path d="M.5.500h7v1.500L4 5.500.5 2z" fill="#e9eef6" stroke="#6d7d95" />
            </IndentMark>
            <IndentMark $x={62} $y={2} width="8" height="12" viewBox="0 0 8 12">
              <path d="M4 .5l3.500 3.500V11.500H.5V4zM.5 7.500h7" fill="#e9eef6" stroke="#6d7d95" />
            </IndentMark>
            <IndentMark $x={412} $y={3} width="8" height="7" viewBox="0 0 8 7">
              <path d="M4 .5L7.500 4v2.500h-7V4z" fill="#e9eef6" stroke="#6d7d95" />
            </IndentMark>
          </RulerScale>
          <BrowseIcon>
            <BrowseGlyph />
          </BrowseIcon>
        </RulerBar>
        <Workspace>
          <SideRuler>
            <SideScale>
              {sideMarks.map((m) => (
                <SideMark key={m}>{m}</SideMark>
              ))}
            </SideScale>
          </SideRuler>
          <Desk />
          <Page>
            <PageTitle>时间管理的十大关键</PageTitle>
            <FirstHeading>
              <span>1</span>
              <span>时间管理</span>
            </FirstHeading>
            <BorderedText>
              <SelectedLine $indent>成功等于目标，</SelectedLine>
              <SelectedLine>到 10 个目标，</SelectedLine>
              <SelectedLine>你的关键就是</SelectedLine>
            </BorderedText>
            <SelectionTail />
            <Heading>
              <span>2</span>
              <span>第二个时间</span>
            </Heading>
            <NumberedList>
              {[1, 2, 3, 4, 5].map((n) => (
                <NumberedItem key={n}>{n})</NumberedItem>
              ))}
            </NumberedList>
            <Heading>
              <span>3</span>
              <span>第三个时间</span>
            </Heading>
          </Page>
          <ScrollGutter>
            <Caret up color="#29446f" />
          </ScrollGutter>
        </Workspace>
        <StatusBar>
          <span>页面: 1/2</span>
          <span>字数: 102/1,341</span>
          <ProofIcon />
          <span>中文</span>
        </StatusBar>
      </AppWindow>
      <BordersDialog />
      <Watermark>
        脚本<Orange>之家</Orange>
        <WatermarkSite>
          <Orange>JB51.</Orange>Net
        </WatermarkSite>
      </Watermark>
      <Pointer width="12" height="18" viewBox="0 0 12 18">
        <path d="M1 1v13l3-3 2.500 5.500 2.500-1L6.500 10H11z" fill="#fff" stroke="#222" />
      </Pointer>
    </Screen>
  );
}
